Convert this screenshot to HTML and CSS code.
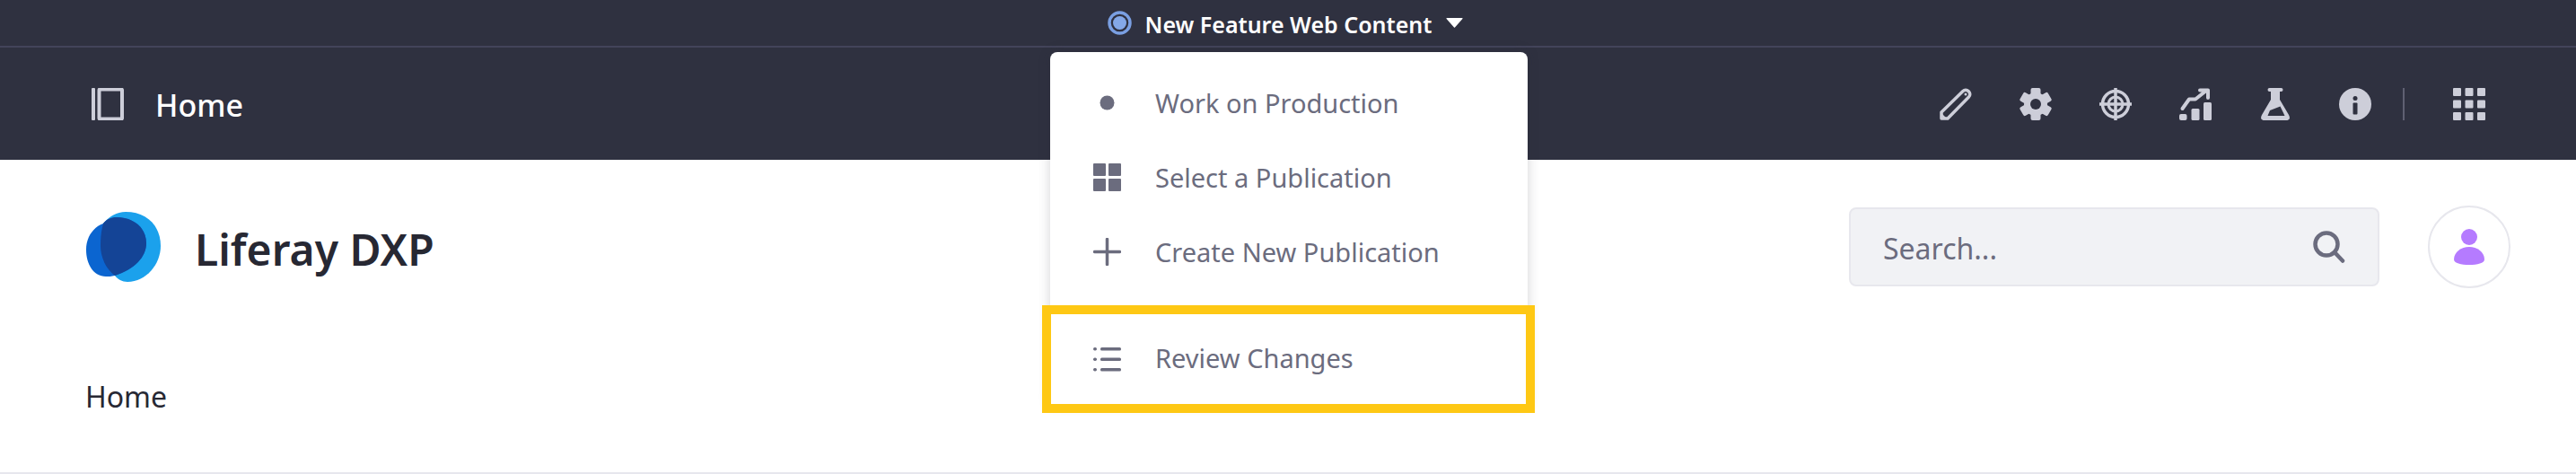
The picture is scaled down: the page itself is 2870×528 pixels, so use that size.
FILE: index.html
```html
<!DOCTYPE html>
<html lang="en">
<head>
    <meta charset="UTF-8">
    <title>Home - Liferay DXP</title>
    <link rel="stylesheet" href="styles.css">
</head>
<body>
    <div class="pub-bar">
        <svg class="pub-dot" viewBox="0 0 27 27"><circle cx="13.5" cy="13.5" r="11.5" fill="none" stroke="#7a9fe2" stroke-width="3.5"/><circle cx="13.5" cy="13.5" r="7.5" fill="#84a8e8"/></svg>
        <span class="pub-name">New Feature Web Content</span>
        <svg class="pub-caret" viewBox="0 0 19 11"><path d="M1 0h17q1 0 .4 1L10 10.400q-.5.600-1 0L.6 1Q0 0 1 0z" fill="#fff"/></svg>
    </div>

    <div class="nav-bar">
        <div class="nav-left">
            <svg class="icon" viewBox="0 0 36 36"><rect x="0" y="0" width="4" height="36" rx="1" fill="#cdced9"/><rect x="8.500" y="1.500" width="25.500" height="33" rx="1" fill="none" stroke="#cdced9" stroke-width="4"/></svg>
            <span class="nav-title">Home</span>
        </div>
        <div class="nav-right">
            <svg class="icon" viewBox="0 0 36 36"><path d="M2 34v-7L26 3.500a4.200 4.200 0 0 1 6 0l.5.5a4.200 4.200 0 0 1 0 6L9 34z" fill="none" stroke="#cdced9" stroke-width="3.500" stroke-linejoin="round"/><path d="M1 35v-8l8 8z" fill="#cdced9"/><circle cx="29" cy="7" r="1.500" fill="#cdced9"/></svg>
            <svg class="icon" viewBox="0 0 36 36"><g fill="#cdced9"><circle cx="18" cy="18" r="13"/><rect x="12.500" y="0" width="11" height="36" rx="2"/><rect x="12.500" y="0" width="11" height="36" rx="2" transform="rotate(60 18 18)"/><rect x="12.500" y="0" width="11" height="36" rx="2" transform="rotate(120 18 18)"/></g><circle cx="18" cy="18" r="6" fill="#2f3140"/></svg>
            <svg class="icon" viewBox="0 0 36 36"><g fill="none" stroke="#cdced9"><circle cx="18" cy="18" r="14.500" stroke-width="3.500"/><circle cx="18" cy="18" r="8" stroke-width="3"/><path d="M18 0v36M0 18h36" stroke-width="3.500"/></g></svg>
            <svg class="icon" viewBox="0 0 36 36"><g fill="#cdced9"><rect x="0" y="29" width="8.500" height="7" rx="2"/><rect x="13.500" y="23" width="9" height="13" rx="1.500"/><rect x="27" y="16" width="9" height="20" rx="1.500"/></g><path d="M3.500 23l7.500-10.500h7L30 3M23 2.500h9v8.500" fill="none" stroke="#cdced9" stroke-width="4" stroke-linecap="round" stroke-linejoin="round"/></svg>
            <svg class="icon" viewBox="0 0 36 36"><rect x="9.500" y="0" width="17" height="4" rx="2" fill="#cdced9"/><path d="M13 3h10v10l10 17q3 6-3.500 6h-23q-6.500 0-3.500-6l10-17z" fill="#cdced9"/><path d="M9.500 31l2.500-6 11.500-4.500 5 10.500z" fill="#2f3140"/></svg>
            <svg class="icon" viewBox="0 0 36 36"><circle cx="18" cy="18" r="18" fill="#cdced9"/><circle cx="18" cy="11.500" r="2.500" fill="#2f3140"/><rect x="15.500" y="16.500" width="5" height="13" rx="1" fill="#2f3140"/></svg>
            <span class="nav-divider"></span>
            <svg class="icon" viewBox="0 0 36 36"><g fill="#cdced9"><rect x="0" y="0" width="9" height="9" rx="1"/><rect x="13.500" y="0" width="9" height="9" rx="1"/><rect x="27" y="0" width="9" height="9" rx="1"/><rect x="0" y="13.500" width="9" height="9" rx="1"/><rect x="13.500" y="13.500" width="9" height="9" rx="1"/><rect x="27" y="13.500" width="9" height="9" rx="1"/><rect x="0" y="27" width="9" height="9" rx="1"/><rect x="13.500" y="27" width="9" height="9" rx="1"/><rect x="27" y="27" width="9" height="9" rx="1"/></g></svg>
        </div>
    </div>

    <header class="site-header">
        <div class="brand">
            <svg class="brand-logo" viewBox="0 0 83 78">
                <path d="M19 13C26 5 34 0 44 0 67 0 83 15 83 38 83 58 67 78 46 78 40 78 35 75 32 71z" fill="#1ba1ec"/>
                <path d="M34 6C52 6 67 17 67 35 67 50 54 64 32 71 28 72 25 72 22 72 8 72 0 58 0 42 0 28 8 17 19 13 23 8 28 6 34 6z" fill="#0b65d0"/>
                <path d="M19 13C23 8 28 6 34 6 52 6 67 17 67 35 67 50 54 64 32 71 22 64 16 50 16 38 16 28 17 20 19 13z" fill="#144496"/>
            </svg>
            <span class="brand-name">Liferay DXP</span>
        </div>
        <div class="header-right">
            <div class="search-box">
                <span class="search-text">Search...</span>
                <svg class="search-icon" viewBox="0 0 36 36"><circle cx="15" cy="15" r="12.500" fill="none" stroke="#6b6c7e" stroke-width="4.500"/><path d="M24 24l9 9.500" stroke="#6b6c7e" stroke-width="4.500" stroke-linecap="round"/></svg>
            </div>
            <div class="avatar">
                <svg class="avatar-icon" viewBox="0 0 34 40"><ellipse cx="17" cy="9" rx="9" ry="9" fill="#b57bff"/><path d="M17 20C26 20 34 26 34 34 34 38 26 40 17 40 8 40 0 38 0 34 0 26 8 20 17 20z" fill="#b57bff"/></svg>
            </div>
        </div>
    </header>

    <nav class="breadcrumb">Home</nav>

    <div class="pub-menu">
        <div class="pub-item">
            <svg class="item-icon" viewBox="0 0 31 31"><circle cx="15.500" cy="15.500" r="8" fill="#6b6c7e"/></svg>
            <span>Work on Production</span>
        </div>
        <div class="pub-item">
            <svg class="item-icon" viewBox="0 0 31 31"><g fill="#6b6c7e"><rect width="14" height="14" rx="1"/><rect x="17" width="14" height="14" rx="1"/><rect y="17" width="14" height="14" rx="1"/><rect x="17" y="17" width="14" height="14" rx="1"/></g></svg>
            <span>Select a Publication</span>
        </div>
        <div class="pub-item">
            <svg class="item-icon" viewBox="0 0 31 31"><path d="M15.500 1.500v28M1.500 15.500h28" stroke="#6b6c7e" stroke-width="3.500" stroke-linecap="round"/></svg>
            <span>Create New Publication</span>
        </div>
        <div class="pub-item review-item">
            <svg class="item-icon" viewBox="0 0 31 31"><g fill="#6b6c7e"><rect y="2" width="4" height="3.500" rx="1.700"/><rect y="13.500" width="4" height="3.500" rx="1.700"/><rect y="25" width="4" height="3.500" rx="1.700"/><rect x="8" y="2" width="23" height="3.500" rx="1.500"/><rect x="8" y="13.500" width="23" height="3.500" rx="1.500"/><rect x="8" y="25" width="23" height="3.500" rx="1.500"/></g></svg>
            <span class="review-label">Review Changes</span>
        </div>
    </div>
</body>
</html>
```
FILE: styles.css
```css
/* Global styles */
html, body {
    margin: 0;
    padding: 0;
    height: 528px;
    overflow: hidden;
}

body {
    font-family: "Noto Sans", "Open Sans", sans-serif;
    background-color: #fff;
    color: #272833;
    position: relative;
    box-sizing: border-box;
    border-bottom: 2px solid #e7e7ed;
}

svg {
    display: block;
    flex: none;
}

/* Publication bar */
.pub-bar {
    height: 51px;
    background-color: #2f3140;
    border-bottom: 2px solid #43445a;
    display: flex;
    align-items: center;
    justify-content: center;
    color: #fff;
    padding-right: 6px;
}

.pub-dot {
    width: 27px;
    height: 27px;
    margin-right: 15px;
}

.pub-name {
    font-size: 25px;
    font-weight: 600;
    line-height: 1;
    padding-top: 3px;
}

.pub-caret {
    width: 19px;
    height: 11px;
    margin-left: 16px;
}

/* Control menu */
.nav-bar {
    height: 125px;
    background-color: #2f3140;
    display: flex;
    align-items: center;
    justify-content: space-between;
    padding: 0 101px 0 102px;
}

.nav-left,
.nav-right {
    display: flex;
    align-items: center;
}

.nav-right {
    gap: 53px;
}

.icon {
    width: 36px;
    height: 36px;
}

.nav-title {
    margin-left: 35px;
    padding-top: 2px;
    color: #fff;
    font-size: 34px;
    font-weight: 500;
}

.nav-divider {
    width: 2px;
    height: 36px;
    background-color: #5f6072;
    margin: 0 1px 0 -18px;
}

/* Site header */
.site-header {
    height: 194px;
    display: flex;
    align-items: center;
    justify-content: space-between;
    padding: 0 73px 0 96px;
}

.brand {
    display: flex;
    align-items: center;
}

.brand-logo {
    width: 83px;
    height: 78px;
}

.brand-name {
    margin-left: 38px;
    padding-top: 4px;
    font-size: 48px;
    font-weight: 600;
}

.header-right {
    display: flex;
    align-items: center;
    gap: 54px;
}

.search-box {
    box-sizing: border-box;
    width: 591px;
    height: 88px;
    background-color: #f1f2f5;
    border: 2px solid #e7e7ed;
    border-radius: 8px;
    display: flex;
    align-items: center;
    justify-content: space-between;
    padding: 0 36px;
}

.search-text {
    padding-top: 3px;
    color: #6b6c7e;
    font-size: 32px;
}

.search-icon {
    width: 36px;
    height: 36px;
}

.avatar {
    box-sizing: border-box;
    width: 92px;
    height: 92px;
    border: 2px solid #e7e7ed;
    border-radius: 50%;
    display: flex;
    align-items: center;
    justify-content: center;
}

.avatar-icon {
    width: 34px;
    height: 40px;
}

.breadcrumb {
    padding: 46px 0 0 95px;
    font-size: 32px;
    line-height: 48px;
}

/* Publication dropdown */
.pub-menu {
    position: absolute;
    left: 1170px;
    top: 58px;
    box-sizing: border-box;
    width: 532px;
    height: 392px;
    padding-top: 15px;
    background-color: #fff;
    border-radius: 8px 8px 0 0;
    box-shadow: 0 0 14px rgba(39, 40, 51, 0.2);
}

.pub-item {
    height: 83px;
    display: flex;
    align-items: center;
    gap: 38px;
    padding-left: 48px;
    color: #6b6c7e;
    font-size: 29px;
}

.item-icon {
    width: 31px;
    height: 31px;
}

.review-item {
    height: 100px;
    margin: 28px 2px 0 1px;
    padding-left: 47px;
    outline: 10px solid #fec814;
}

.review-label {
    padding-bottom: 3px;
}
```
